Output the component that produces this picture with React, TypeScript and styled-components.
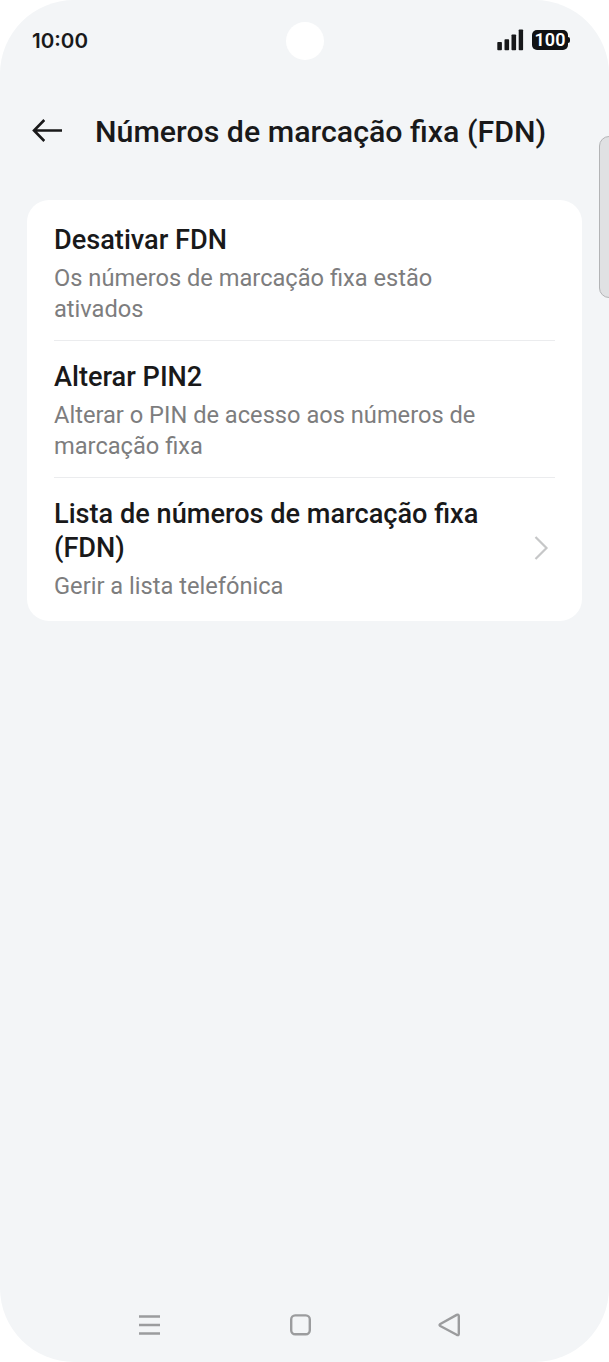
import React from "react";
import styled, { createGlobalStyle } from "styled-components";

const GlobalStyle = createGlobalStyle`
  *, *::before, *::after { box-sizing: border-box; }
  html, body { margin: 0; padding: 0; background: #fff; }
  h1, h2, p, ul { margin: 0; padding: 0; font-weight: 400; }
  button { border: 0; background: none; padding: 0; display: flex; }
`;

const Screen = styled.main`
  position: relative;
  display: flex;
  flex-direction: column;
  width: 609px;
  height: 1362px;
  overflow: hidden;
  border-radius: 74px;
  background: #f3f5f7;
  color: #19191a;
  font-family: Roboto, sans-serif;
`;

const StatusBar = styled.header`
  display: flex;
  align-items: center;
  justify-content: space-between;
  height: 80px;
  padding: 0 39px 0 32px;
`;

const Clock = styled.time`
  font: 600 20.6px/24px Inter, sans-serif;
  width: 90px;
  padding-top: 1px;
`;

const Camera = styled.span`
  width: 38px;
  height: 38px;
  margin: 2px 0 0 52px;
  border-radius: 50%;
  background: #fff;
`;

const StatusIcons = styled.div`
  display: flex;
  align-items: center;
  justify-content: flex-end;
  gap: 8px;
  width: 135px;
`;

const Battery = styled.span`
  position: relative;
  display: flex;
  align-items: center;
  justify-content: center;
  width: 36px;
  height: 20px;
  margin-right: 2px;
  border-radius: 5px;
  background: #111214;
  color: #fff;
  font: 600 18px/20px Roboto, sans-serif;

  &::after {
    content: "";
    position: absolute;
    right: -2px;
    top: 7px;
    width: 3px;
    height: 6px;
    border-radius: 0 2px 2px 0;
    background: #111214;
  }
`;

const TitleBar = styled.div`
  display: flex;
  align-items: center;
  height: 102px;
  padding-left: 32px;
  gap: 32px;
`;

const Title = styled.h1`
  padding-top: 1px;
  font-size: 30.35px;
  line-height: 38px;
  font-weight: 500;
  white-space: nowrap;
`;

const Card = styled.ul`
  margin: 18px 27px 0;
  padding: 0 27px;
  height: 421px;
  border-radius: 22px;
  background: #fff;
  list-style: none;
`;

const Row = styled.li`
  display: flex;
  align-items: center;
  justify-content: space-between;
  padding: 23px 0 15px;

  & + & { border-top: 1px solid #ebecee; padding-top: 19px; }
`;

const RowText = styled.div`
  width: 440px;
`;

const RowTitle = styled.h2`
  font-size: 27.15px;
  line-height: 34px;
  font-weight: 500;
`;

const RowNote = styled.p`
  margin-top: 6px;
  font-size: 23.65px;
  line-height: 31px;
  color: #7d7d7e;
`;

const Chevron = styled.svg`
  flex: none;
  margin: 0 6px 4px 0;
`;

const SideHandle = styled.div`
  position: absolute;
  left: 599px;
  top: 136px;
  width: 20px;
  height: 162px;
  border: 1px solid #b3b4b6;
  border-radius: 10px;
  background: #e0e1e3;
`;

const NavBar = styled.nav`
  display: flex;
  justify-content: space-between;
  margin-top: auto;
  padding: 0 147px 25px 137px;
`;

const rows = [
  { title: "Desativar FDN", note: "Os números de marcação fixa estão ativados" },
  { title: "Alterar PIN2", note: "Alterar o PIN de acesso aos números de marcação fixa" },
  { title: "Lista de números de marcação fixa (FDN)", note: "Gerir a lista telefónica", link: true },
];

export default function App() {
  return (
    <>
      <GlobalStyle />
      <Screen>
        <StatusBar>
          <Clock>10:00</Clock>
          <Camera />
          <StatusIcons>
            <svg width="27" height="22" viewBox="0 0 27 22" fill="#17181a">
              <rect x="0.3" y="13" width="4.6" height="8.2" rx="0.8" />
              <rect x="7.5" y="10.3" width="4.6" height="10.9" rx="0.8" />
              <rect x="14.5" y="5.5" width="4.6" height="15.7" rx="0.8" />
              <rect x="21.7" y="0.5" width="4.4" height="20.7" rx="0.8" />
            </svg>
            <Battery>100</Battery>
          </StatusIcons>
        </StatusBar>
        <TitleBar>
          <button aria-label="Voltar">
            <svg width="31" height="24" viewBox="0 0 31 24" fill="none" stroke="#19191a" strokeWidth="2.6">
              <path d="M30 11.5H2M12.3 1L2 11.5l10.3 10.5" />
            </svg>
          </button>
          <Title>Números de marcação fixa (FDN)</Title>
        </TitleBar>
        <Card>
          {rows.map((row) => (
            <Row key={row.title}>
              <RowText>
                <RowTitle>{row.title}</RowTitle>
                <RowNote>{row.note}</RowNote>
              </RowText>
              {row.link && (
                <Chevron width="16" height="26" viewBox="0 0 16 26" fill="none" stroke="#c6c7c8" strokeWidth="2.2">
                  <path d="M2.5 2L13.5 13L2.5 24" />
                </Chevron>
              )}
            </Row>
          ))}
        </Card>
        <SideHandle />
        <NavBar>
          <button aria-label="Recentes">
            <svg width="24" height="24" viewBox="0 0 24 24" stroke="#9b9c9e" strokeWidth="2.4">
              <path d="M2 3.5H23M2 12H23M2 20.5H23" />
            </svg>
          </button>
          <button aria-label="Início">
            <svg width="24" height="24" viewBox="0 0 24 24" fill="none" stroke="#9b9c9e" strokeWidth="2.4">
              <rect x="3.2" y="2.4" width="18.6" height="18.8" rx="4" />
            </svg>
          </button>
          <button aria-label="Anterior">
            <svg width="24" height="24" viewBox="0 0 24 24" fill="none" stroke="#9b9c9e" strokeWidth="2.4" strokeLinejoin="round">
              <path d="M2.3 11L18.7 1.9Q20.8 1 20.8 3V20.8Q20.8 22.8 18.7 21.8L2.3 13Q.8 12 2.3 11Z" />
            </svg>
          </button>
        </NavBar>
      </Screen>
    </>
  );
}
